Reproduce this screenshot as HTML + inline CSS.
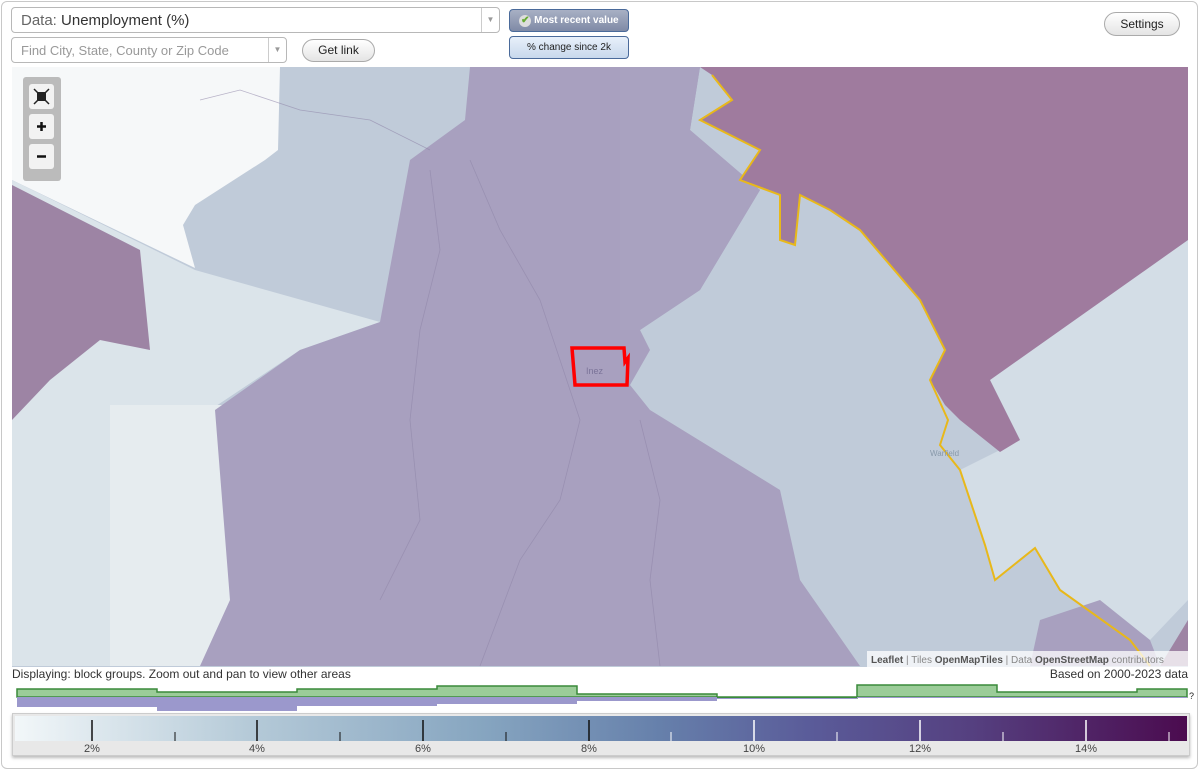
<!DOCTYPE html>
<html><head><meta charset="utf-8"><style>
*{box-sizing:border-box}
body{margin:0;width:1200px;height:771px;background:#fff;font-family:"Liberation Sans",sans-serif;overflow:hidden;position:relative}
.frame{position:absolute;left:1px;top:1px;width:1197px;height:768px;border:1px solid #c8c8c8;border-radius:6px}
.sel{position:absolute;background:#fff;border:1px solid #b8b8b8;border-radius:4px;color:#333}
.arrow{position:absolute;right:0;top:0;bottom:0;width:18px;border-left:1px solid #ccc;color:#999;font-size:8px;text-align:center}
.btn{position:absolute;border:1px solid #aaa;border-radius:12px;background:linear-gradient(#fff,#e4e4e4);font-size:12px;color:#222;text-align:center}
.tog{position:absolute;border:1px solid #4a6a9a;border-radius:4px;font-size:10px;text-align:center}
</style></head><body>
<div class="frame"></div>
<div class="sel" style="left:11px;top:7px;width:489px;height:26px;font-size:15px;padding:4px 9px"><span style="color:#666">Data:</span> Unemployment (%)<div class="arrow" style="line-height:24px">▼</div></div>
<div class="sel" style="left:11px;top:37px;width:276px;height:26px;font-size:13px;padding:5px 9px;color:#999">Find City, State, County or Zip Code<div class="arrow" style="line-height:24px">▼</div></div>
<div class="btn" style="left:302px;top:39px;width:73px;height:23px;line-height:21px">Get link</div>
<div class="btn" style="left:1104px;top:12px;width:76px;height:24px;line-height:22px">Settings</div>
<div class="tog" style="left:509px;top:9px;width:120px;height:23px;line-height:21px;background:linear-gradient(#a8b0c4,#7f8aa6);color:#fff;font-weight:bold"><span style="color:#6a3;display:inline-block;background:#ddd;border-radius:50%;width:12px;height:12px;line-height:12px;font-size:10px">✔</span> Most recent value</div>
<div class="tog" style="left:509px;top:36px;width:120px;height:23px;line-height:21px;background:linear-gradient(#e8f0fa,#c8d8ec);color:#222">% change since 2k</div>

<svg style="position:absolute;left:12px;top:67px" width="1176" height="600" viewBox="12 67 1176 600">
<rect x="12" y="67" width="1176" height="600" fill="#c0cbd9"/>
<polygon fill="#f6f8f9" points="12,67 280,67 278,150 265,160 195,205 183,225 195,268 12,180"/>
<polygon fill="#dbe4ea" points="12,180 195,270 380,322 300,350 210,410 200,666 12,666"/>
<polygon fill="#e6ecef" points="110,405 365,405 365,666 110,666"/>
<polygon fill="#9d84a4" points="12,185 140,250 150,350 100,340 50,380 12,420"/>
<polygon fill="#a8a0bf" points="435,67 700,67 690,130 760,190 700,290 640,330 650,350 630,385 650,410 780,490 800,580 860,666 200,666 230,600 215,410 300,350 380,322 410,160 465,120 470,67"/>
<polygon fill="#a9a2c0" points="620,67 700,67 690,130 760,190 700,290 640,330 620,330"/>
<polygon fill="#d3dde6" points="990,380 1188,240 1188,600 1150,640 1130,640 1060,590 1035,548 995,580 985,545 960,470 1000,450 1020,440"/>
<polygon fill="#9f7b9e" points="700,67 1188,67 1188,240 990,380 1000,400 1020,440 1000,452 960,420 945,405 930,380 945,350 920,300 860,230 830,210 800,195 795,245 780,240 780,195 740,180 760,150 700,120 732,100 712,75"/>
<polygon fill="#a8a0bf" points="1040,620 1100,600 1150,640 1160,666 1030,666"/>
<polygon fill="#9e84a4" points="1160,666 1188,620 1188,666"/>
<polyline fill="none" stroke="#e8b81a" stroke-width="2" points="712,75 732,100 700,120 760,150 740,180 780,195 780,240 795,245 800,195 830,210 860,230 920,300 945,350 930,380 948,420 940,445 960,470 985,545 995,580 1035,548 1060,590 1130,640 1150,666"/>
<g fill="none" stroke="#8f86a8" stroke-width="0.8" opacity="0.6">
<path d="M470,160 L500,230 L540,300 L560,360 L580,420 L560,500 L520,560 L480,666"/>
<path d="M430,170 L440,250 L420,330 L410,420 L420,520 L380,600"/>
<path d="M640,420 L660,500 L650,580 L660,666"/>
<path d="M200,100 L240,90 L300,110 L370,120 L430,150"/>
</g>
<polygon fill="none" stroke="#f00" stroke-width="3.5" points="572,348 624,348 625,362 628,358 627,385 575,385"/>
<text x="586" y="374" font-size="9" fill="#7b7499">Inez</text>
<text x="930" y="456" font-size="8" fill="#8899aa">Warfield</text>
<rect x="23" y="77" width="38" height="104" rx="3" fill="#bbb"/>
<rect x="29" y="84" width="25" height="25" rx="3" fill="#f2f2f2"/>
<rect x="29" y="114" width="25" height="25" rx="3" fill="#f2f2f2"/>
<rect x="29" y="144" width="25" height="25" rx="3" fill="#f2f2f2"/>
<rect x="37" y="92" width="9" height="9" fill="#222"/>
<path d="M34,89 l4,4 M49,89 l-4,4 M34,104 l4,-4 M49,104 l-4,-4" stroke="#222" stroke-width="1.5"/>
<path d="M37,126.5 h9 M41.5,122 v9 M37,156.5 h9" stroke="#111" stroke-width="2.5"/>
<rect x="867" y="651" width="321" height="16" fill="rgba(255,255,255,0.75)"/>
<text x="871" y="663" font-size="10" fill="#888"><tspan fill="#555" font-weight="bold">Leaflet</tspan> | Tiles <tspan fill="#555" font-weight="bold">OpenMapTiles</tspan> | Data <tspan fill="#555" font-weight="bold">OpenStreetMap</tspan> contributors</text>
</svg>

<div style="position:absolute;left:12px;top:667px;font-size:12px;color:#333">Displaying: block groups. Zoom out and pan to view other areas</div>
<div style="position:absolute;right:12px;top:667px;font-size:12px;color:#333">Based on 2000-2023 data</div>

<svg style="position:absolute;left:0;top:683px" width="1200" height="30">
<g fill="#9bcc98" stroke="#3a8a3a" stroke-width="1.5">
<path d="M17,14 V6 H157 V9 H297 V6 H437 V3 H577 V11 H717 V14 Z"/>
<path d="M717,14 V15 H857 V2 H997 V9 H1137 V6 H1187 V14 Z"/>
</g>
<g fill="#9b98cc">
<rect x="17" y="14" width="140" height="10"/><rect x="157" y="14" width="140" height="14"/><rect x="297" y="14" width="140" height="9"/><rect x="437" y="14" width="140" height="7"/><rect x="577" y="14" width="140" height="4"/><rect x="717" y="15" width="140" height="1"/><rect x="857" y="14" width="330" height="1"/>
</g>
<text x="1189" y="16" font-size="9" fill="#222">?</text>
</svg>

<div style="position:absolute;left:12px;top:713px;width:1178px;height:43px;border:1px solid #ccc;box-shadow:0 2px 3px #bbb;background:#e8e8e8">
<div style="position:absolute;left:2px;top:2px;right:2px;height:25px;background:linear-gradient(90deg,#f2f7f9,#b5cad8 20%,#86a5c0 40%,#6680ab 55%,#5a5b99 68%,#553f7f 82%,#4b0b4f)"></div>
<svg style="position:absolute;left:0;top:0" width="1178" height="43">
<g stroke="#111" stroke-width="1.5"><path d="M79,6V27M244,6V27M410,6V27M576,6V27"/><path d="M162,18V27M327,18V27M493,18V27" stroke-width="1"/></g>
<g stroke="#fff" stroke-width="1.5"><path d="M741,6V27M907,6V27M1073,6V27"/><path d="M658,18V27M824,18V27M990,18V27M1156,18V27" stroke-width="1"/></g>
<g font-size="11" fill="#444" text-anchor="middle"><text x="79" y="38">2%</text><text x="244" y="38">4%</text><text x="410" y="38">6%</text><text x="576" y="38">8%</text><text x="741" y="38">10%</text><text x="907" y="38">12%</text><text x="1073" y="38">14%</text></g>
</svg></div>
</body></html>
